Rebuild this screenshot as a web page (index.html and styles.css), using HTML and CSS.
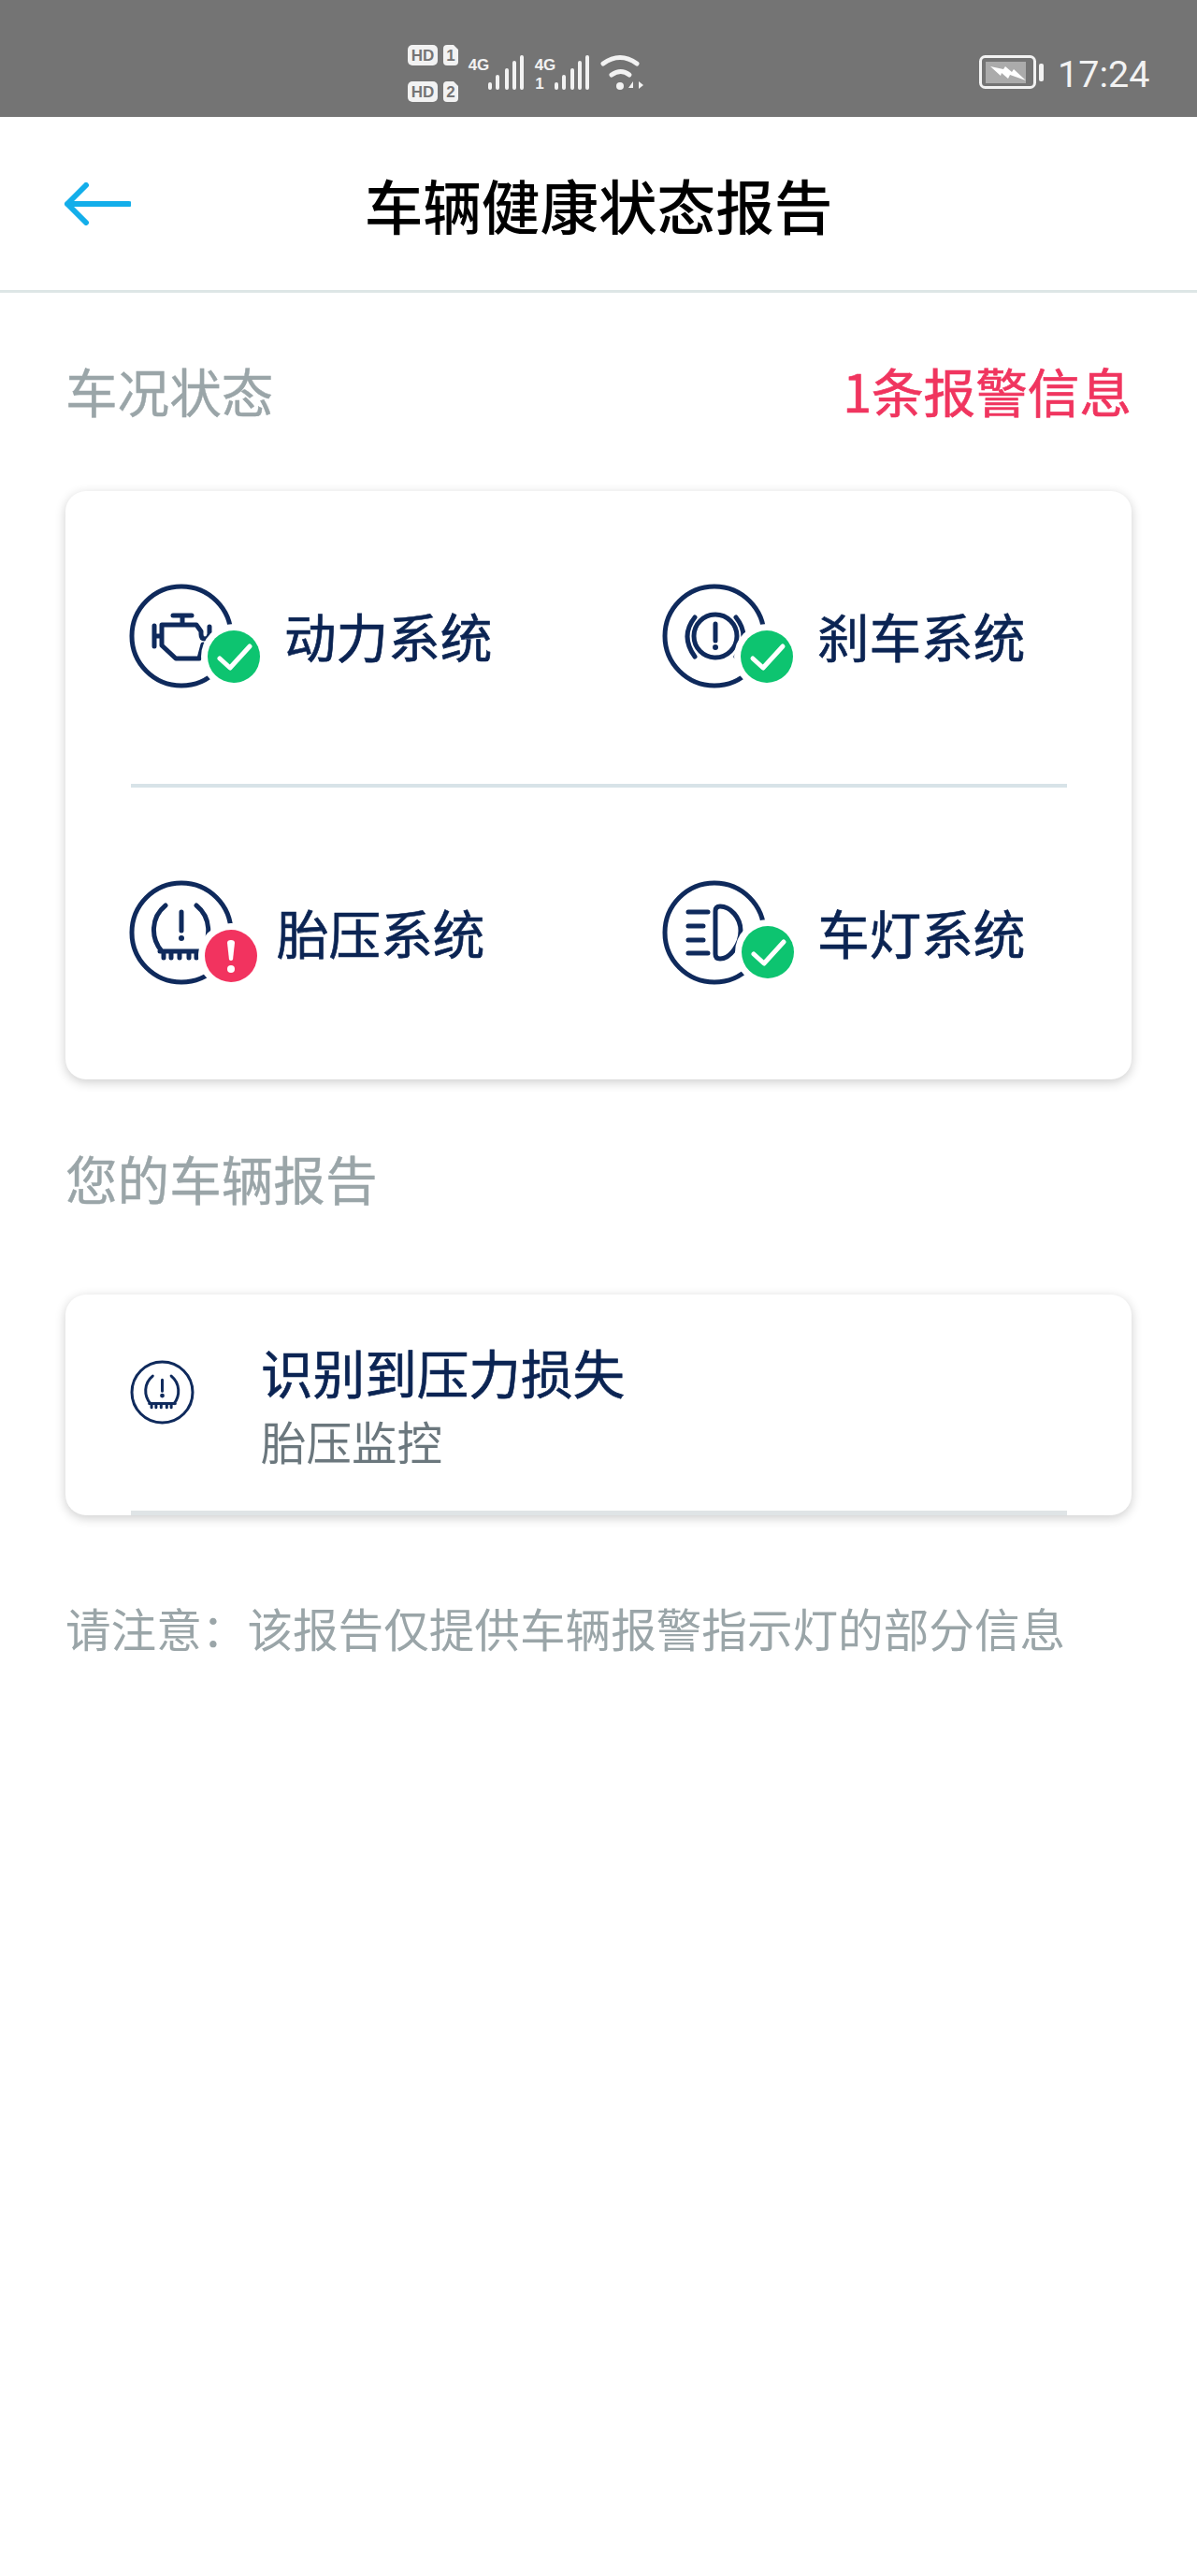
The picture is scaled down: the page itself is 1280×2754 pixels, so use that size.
FILE: index.html
```html
<!DOCTYPE html>
<html lang="zh-CN">
<head>
    <meta charset="UTF-8">
    <meta name="viewport" content="width=device-width, initial-scale=1.0">
    <title>车辆健康状态报告</title>
    <link rel="stylesheet" href="styles.css">
</head>
<body>
    <div class="statusbar">
        <svg class="sb-signals" width="260" height="70" viewBox="430 45 260 70">
            <g fill="#f2f2f2">
                <rect x="436" y="48" width="32" height="22" rx="5"/>
                <rect x="436" y="87" width="32" height="22" rx="5"/>
                <path d="M474 52q0-4 4-4h7l5 5v13q0 4-4 4h-8q-4 0-4-4z"/>
                <path d="M474 91q0-4 4-4h7l5 5v13q0 4-4 4h-8q-4 0-4-4z"/>
            </g>
            <g class="sb-tag">
                <text x="452" y="65">HD</text>
                <text x="452" y="104">HD</text>
                <text x="482" y="65">1</text>
                <text x="482" y="104">2</text>
            </g>
            <g class="sb-net">
                <text x="512" y="75">4G</text>
                <text x="583" y="75">4G</text>
                <text x="577" y="95">1</text>
            </g>
            <path class="sb-bars" d="M524 90v4M532 82v12M542 75v19M550 67v27M558 61v33M595 90v4M603 82v12M612 75v19M620 67v27M628 61v33"/>
            <path class="sb-wifi" d="M645 68q18-13 36 0M654 80q10-7 19 0"/>
            <circle cx="663" cy="92" r="4" fill="#f2f2f2"/>
            <path d="M672 94l5-7v7zM683 87l5 4-5 4z" fill="#f2f2f2"/>
        </svg>
        <svg class="sb-battery" width="70" height="38" viewBox="1047 58 70 38">
            <rect x="1048.5" y="60.5" width="58" height="33" rx="5" fill="none" stroke="#f2f2f2" stroke-width="3"/>
            <rect x="1054" y="66" width="43" height="23" fill="#ababab"/>
            <rect x="1111" y="68" width="5" height="19" rx="2" fill="#f2f2f2"/>
            <path d="M1059 71l14 3 2-3 7 6 2-3 13 12-17-6-2 4-7-6-1 3z" fill="#fff"/>
        </svg>
        <span class="sb-time">17:24</span>
    </div>

    <header class="topbar">
        <svg class="back" width="72" height="46" viewBox="0 0 72 46">
            <path d="M70 23H4M24 3L4 23l20 20" fill="none" stroke="#13aeea" stroke-width="6" stroke-linecap="round" stroke-linejoin="round"/>
        </svg>
        <h1>车辆健康状态报告</h1>
    </header>

    <main class="content">
        <div class="section-head first">
            <span class="section-title">车况状态</span>
            <span class="alarm">1条报警信息</span>
        </div>

        <div class="card systems">
            <div class="system">
                <svg class="status-icon" width="150" height="120" viewBox="0 0 150 120">
                    <circle class="line" cx="59" cy="60" r="53"/>
                    <path class="line" d="M50 38h20M60 38v10M38 48h37l5 7v3q0 5 4 5t5-5v-8M30 49v22M30 60h8M38 48v22l15 14h25l4-15"/>
                    <circle cx="115" cy="82" r="35" fill="#fff"/>
                    <circle cx="115" cy="82" r="28" fill="#0dc470"/>
                    <path class="tick" d="M100 84l11 10 21-23"/>
                </svg>
                <span class="system-name">动力系统</span>
            </div>
            <div class="system">
                <svg class="status-icon" width="150" height="120" viewBox="0 0 150 120">
                    <circle class="line" cx="59" cy="60" r="53"/>
                    <circle class="line" cx="60" cy="60" r="23"/>
                    <path class="line" d="M38 40Q22 60 38 82M82 40Q98 60 82 82M60 47v18"/>
                    <circle cx="60" cy="72" r="3" fill="#0f2a5c"/>
                    <circle cx="115" cy="82" r="35" fill="#fff"/>
                    <circle cx="115" cy="82" r="28" fill="#0dc470"/>
                    <path class="tick" d="M100 84l11 10 21-23"/>
                </svg>
                <span class="system-name">刹车系统</span>
            </div>
            <div class="system-line"></div>
            <div class="system">
                <svg class="status-icon" width="142" height="120" viewBox="0 0 142 120">
                    <circle class="line" cx="59" cy="60" r="53"/>
                    <path class="line" d="M42 31C26 44 26 66 38 80M75 31C91 44 91 66 80 80M36 80h46M40 80v7M48 80v7M57 80v7M67 80v7M75 80v7M59 38v20"/>
                    <circle cx="59" cy="66" r="3" fill="#0f2a5c"/>
                    <circle cx="112" cy="85" r="35" fill="#fff"/>
                    <circle cx="112" cy="85" r="28" fill="#f2335f"/>
                    <path d="M108 71q0-3 4-3t4 3l-2 18q-2 2-4 0z" fill="#fff"/>
                    <circle cx="112" cy="99" r="4" fill="#fff"/>
                </svg>
                <span class="system-name">胎压系统</span>
            </div>
            <div class="system">
                <svg class="status-icon" width="150" height="120" viewBox="0 0 150 120">
                    <circle class="line" cx="59" cy="60" r="53"/>
                    <path class="line" d="M31 38h21M31 53h16M31 68h16M31 82h21M65 32C76 32 87 44 87 58C87 72 76 88 65 88Q60 88 60 83V37Q60 32 65 32Z"/>
                    <circle cx="116" cy="81" r="35" fill="#fff"/>
                    <circle cx="116" cy="81" r="28" fill="#0dc470"/>
                    <path class="tick" d="M101 83l11 10 21-23"/>
                </svg>
                <span class="system-name">车灯系统</span>
            </div>
        </div>

        <div class="section-head second">
            <span class="section-title">您的车辆报告</span>
        </div>

        <div class="card report">
            <svg class="report-icon" width="71" height="71" viewBox="0 0 118 118">
                <circle class="line report-ring" cx="59" cy="59" r="54"/>
                <path class="line" d="M42 30C26 43 26 65 38 79M75 30C91 43 91 65 80 79M36 79h46M40 79v7M48 79v7M57 79v7M67 79v7M75 79v7M59 37v20"/>
                <circle cx="59" cy="65" r="4" fill="#0f2a5c"/>
            </svg>
            <div class="report-text">
                <div class="report-title">识别到压力损失</div>
                <div class="report-sub">胎压监控</div>
            </div>
            <div class="report-line"></div>
        </div>

        <p class="note">请注意：该报告仅提供车辆报警指示灯的部分信息</p>
    </main>
</body>
</html>
```

FILE: styles.css
```css
* {
    box-sizing: border-box;
}
body {
    margin: 0;
    background: #fff;
    font-family: "Noto Sans CJK SC", "Noto Sans", sans-serif;
}

/* status bar */
.statusbar {
    height: 125px;
    background: #747474;
    display: flex;
    padding-left: 430px;
    position: relative;
}
.sb-signals {
    margin-top: 45px;
}
.sb-battery {
    margin: 58px 0 0 357px;
}
.sb-time {
    margin: 57px 0 0 14px;
    font-family: Roboto, sans-serif;
    font-size: 39.5px;
    line-height: 46px;
    color: #f2f2f2;
}
.sb-tag text {
    font-family: "Liberation Sans", sans-serif;
    font-size: 17px;
    font-weight: 700;
    fill: #747474;
    text-anchor: middle;
}
.sb-net text {
    font-family: "Liberation Sans", sans-serif;
    font-size: 17px;
    font-weight: 700;
    fill: #f2f2f2;
    text-anchor: middle;
}
.sb-bars, .sb-wifi {
    fill: none;
    stroke: #f2f2f2;
    stroke-linecap: round;
}
.sb-bars {
    stroke-width: 4;
}
.sb-wifi {
    stroke-width: 5;
}

/* top bar */
.topbar {
    height: 188px;
    border-bottom: 3px solid #dde6e6;
    display: flex;
    align-items: center;
    justify-content: center;
    position: relative;
}
.back {
    position: absolute;
    left: 68px;
    top: 70px;
}
.topbar h1 {
    margin: 0;
    font-size: 62.6px;
    font-weight: 500;
    line-height: 80px;
    color: #000;
}

.content {
    padding: 0 70px;
}
.section-head {
    display: flex;
    justify-content: space-between;
    align-items: center;
    height: 70px;
}
.section-head.first {
    margin-top: 69px;
}
.section-head.second {
    margin-top: 70px;
}
.section-title {
    font-size: 55.6px;
    color: #9aa5a8;
    -webkit-text-stroke: 0.4px #9aa5a8;
}
.alarm {
    font-size: 55.6px;
    color: #f0355f;
    -webkit-text-stroke: 0.7px #f0355f;
}

.card {
    background: #fff;
    border-radius: 22px;
    box-shadow: 0 3px 12px rgba(0, 0, 0, 0.2);
}

/* status card */
.systems {
    margin-top: 73px;
    height: 629px;
    padding: 0 65px;
    display: grid;
    grid-template-columns: 570px 570px;
    grid-template-rows: 313px 4px 312px;
}
.system {
    display: flex;
    align-items: center;
    gap: 19px;
    padding-bottom: 3px;
}
.system-name {
    margin-top: -2px;
    font-size: 55.6px;
    color: #0b2453;
    -webkit-text-stroke: 0.7px #0b2453;
}
.system-line {
    grid-column: 1 / 3;
    margin: 0 5px;
    width: 1001px;
    background: #d8e3e8;
}
.line {
    fill: none;
    stroke: #0f2a5c;
    stroke-width: 5;
    stroke-linecap: round;
    stroke-linejoin: round;
}
.tick {
    fill: none;
    stroke: #fff;
    stroke-width: 5;
    stroke-linecap: round;
    stroke-linejoin: round;
}

/* report card */
.report {
    margin-top: 90px;
    height: 236px;
    position: relative;
    display: flex;
    align-items: center;
    padding-left: 68px;
}
.report-icon {
    flex: none;
    margin-top: -28px;
}
.report-text {
    margin: -6px 0 0 70px;
}
.report-title {
    font-size: 55.6px;
    line-height: 82px;
    color: #0b2453;
    -webkit-text-stroke: 0.7px #0b2453;
}
.report-sub {
    font-size: 48.5px;
    line-height: 66px;
    color: #6b777d;
}
.report-line {
    position: absolute;
    left: 70px;
    bottom: 0;
    width: 1001px;
    height: 5px;
    background: #dfe4e6;
}

.note {
    margin: 85px 0 0;
    font-size: 48.6px;
    line-height: 70px;
    color: #9aa5a8;
    white-space: nowrap;
}
```
